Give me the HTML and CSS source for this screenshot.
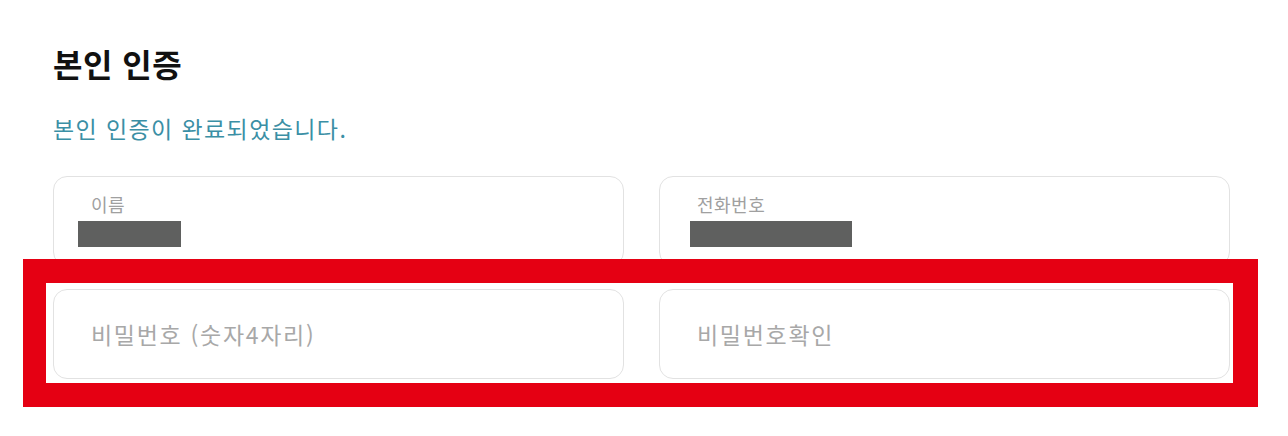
FILE: index.html
```html
<!DOCTYPE html>
<html lang="ko">
<head>
  <meta charset="UTF-8">
  <meta name="viewport" content="width=device-width, initial-scale=1.0">
  <title>본인 인증</title>
  <link rel="stylesheet" href="styles.css">
</head>
<body>
  <div class="page">
    <h2 class="title">본인 인증</h2>
    <p class="notice">본인 인증이 완료되었습니다.</p>

    <div class="form-grid">
      <div class="field">
        <span class="field-label">이름</span>
        <span class="masked masked-name"></span>
      </div>
      <div class="field">
        <span class="field-label">전화번호</span>
        <span class="masked masked-phone"></span>
      </div>
      <input class="field-input" type="password" placeholder="비밀번호 (숫자4자리)">
      <input class="field-input" type="password" placeholder="비밀번호확인">
    </div>

    <!-- annotation box around the password row -->
    <div class="highlight"></div>
  </div>
</body>
</html>
```

FILE: styles.css
```css
body {
  margin: 0;
  background: #fff;
  font-family: "Noto Sans CJK KR", "Noto Sans", sans-serif;
  color: #111;
}

.page {
  position: relative;
  width: 1288px;
  height: 436px;
  box-sizing: border-box;
  padding: 41px 0 0 53px;
}

.title {
  margin: 0;
  font-size: 32px;
  line-height: 44px;
  font-weight: 700;
  letter-spacing: 0.5px;
  color: #111;
}

.notice {
  margin: 28px 0 0;
  font-size: 23px;
  line-height: 30px;
  letter-spacing: 1.4px;
  color: #3b8fa5;
}

.form-grid {
  display: grid;
  grid-template-columns: 571px 571px;
  grid-auto-rows: 90px;
  column-gap: 35px;
  row-gap: 23px;
  margin-top: 33px;
}

.field {
  display: flex;
  flex-direction: column;
  align-items: flex-start;
  border: 1px solid #e2e2e2;
  border-radius: 14px;
  padding: 15px 0 0 37px;
  box-sizing: border-box;
}

.field-label {
  font-size: 18px;
  line-height: 24px;
  letter-spacing: 0.5px;
  color: #a0a0a0;
}

/* grey blocks hiding the personal data */
.masked {
  display: block;
  height: 26px;
  margin-top: 5px;
  background: #5f605f;
}

.masked-name {
  width: 103px;
  margin-left: -13px;
}

.masked-phone {
  width: 162px;
  margin-left: -7px;
}

.field-input {
  border: 1px solid #e2e2e2;
  border-radius: 14px;
  padding: 0 0 0 37px;
  box-sizing: border-box;
  font-family: inherit;
  font-size: 23px;
  letter-spacing: 1.7px;
  color: #333;
  background: #fff;
  outline: none;
}

.field-input::placeholder {
  color: #a8a8a8;
}

.highlight {
  position: absolute;
  left: 23px;
  top: 259px;
  width: 1235px;
  height: 148px;
  box-sizing: border-box;
  border: 24px solid #e50013;
  border-left-width: 23px;
  border-right-width: 25px;
}
```
